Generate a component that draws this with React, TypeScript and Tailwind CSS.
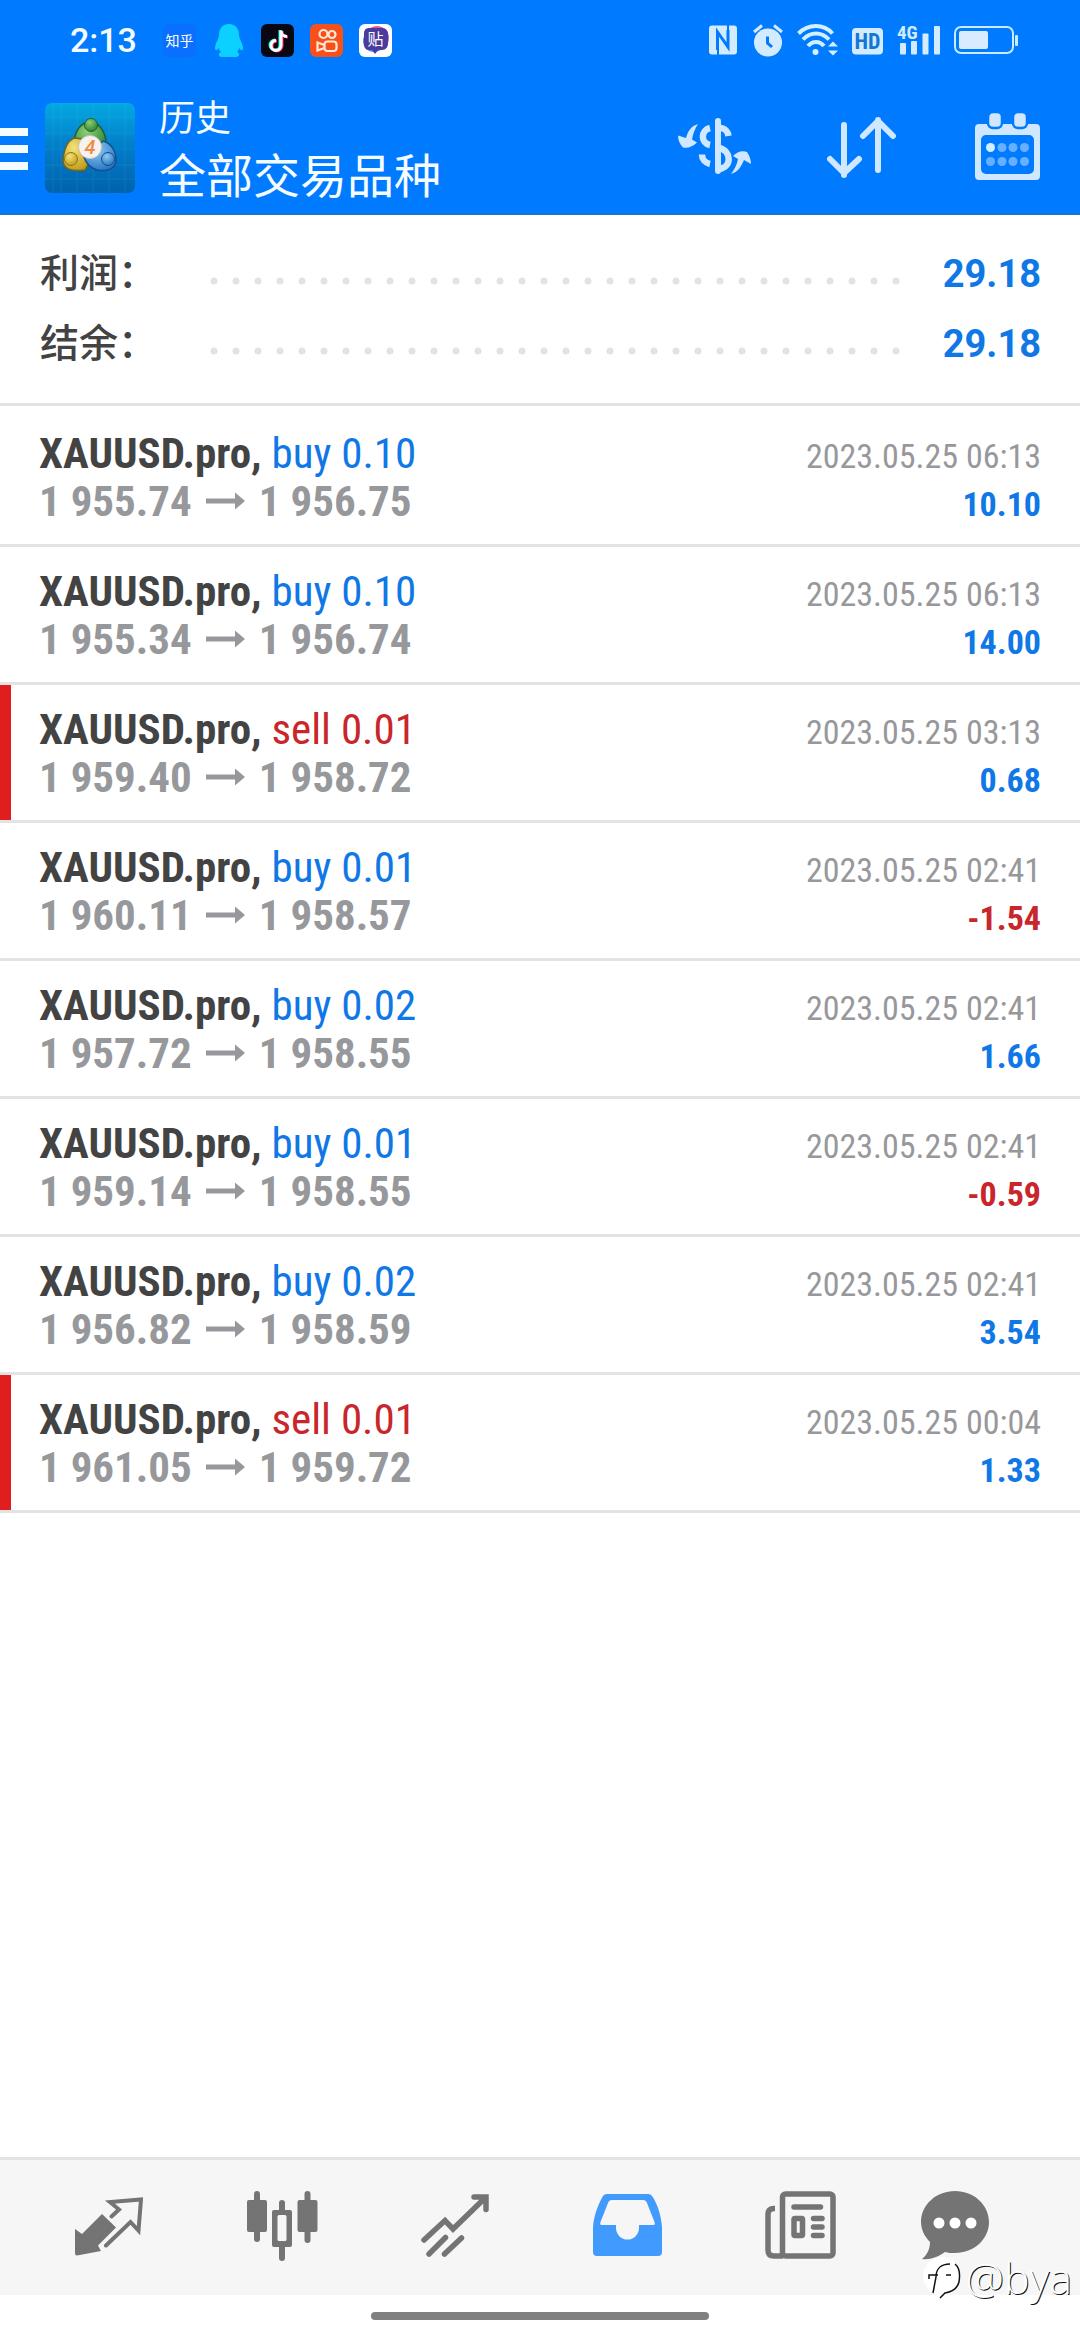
import { ReactNode } from "react";

const SUMMARY = [
  { label: "利润：", value: "29.18" },
  { label: "结余：", value: "29.18" },
];

const DEALS = [
  { side: "buy", volume: "0.10", open: "1 955.74", close: "1 956.75", time: "2023.05.25 06:13", profit: "10.10" },
  { side: "buy", volume: "0.10", open: "1 955.34", close: "1 956.74", time: "2023.05.25 06:13", profit: "14.00" },
  { side: "sell", volume: "0.01", open: "1 959.40", close: "1 958.72", time: "2023.05.25 03:13", profit: "0.68" },
  { side: "buy", volume: "0.01", open: "1 960.11", close: "1 958.57", time: "2023.05.25 02:41", profit: "-1.54" },
  { side: "buy", volume: "0.02", open: "1 957.72", close: "1 958.55", time: "2023.05.25 02:41", profit: "1.66" },
  { side: "buy", volume: "0.01", open: "1 959.14", close: "1 958.55", time: "2023.05.25 02:41", profit: "-0.59" },
  { side: "buy", volume: "0.02", open: "1 956.82", close: "1 958.59", time: "2023.05.25 02:41", profit: "3.54" },
  { side: "sell", volume: "0.01", open: "1 961.05", close: "1 959.72", time: "2023.05.25 00:04", profit: "1.33" },
];

function StatusBar() {
  return (
    <div className="flex items-center justify-between pt-6 pb-[2px] pl-[70px] pr-[62px]">
      <div className="flex items-center">
        <span className="text-[34px] leading-[33px] font-medium w-[93px]">2:13</span>
        <div className="flex items-center gap-4">
          {/* Zhihu */}
          <svg width="33" height="33" viewBox="0 0 33 33">
            <rect width="33" height="33" rx="6" fill="#0a6fff" />
            <text x="16.500" y="22" textAnchor="middle" fontSize="14" fill="#fff">知乎</text>
          </svg>

          {/* QQ */}
          <svg width="33" height="33" viewBox="0 0 33 33" fill="#0cd0ff">
            <path d="M17 0c-7 0-10 5-10 11 0 4-4 8-4 13 0 3 2 3 4 0 0 2 1 3 2 4-3 1-3 5 1 5h14c4 0 4-4 1-5 1-1 2-2 2-4 2 3 4 3 4 0 0-5-4-9-4-13 0-6-3-11-10-11z" />
          </svg>

          {/* TikTok */}
          <svg width="33" height="33" viewBox="0 0 33 33" fill="none" strokeWidth="3">
            <rect width="33" height="33" rx="6" fill="#080812" />
            <path d="M19 6v15a5 5 0 1 1-5-5M19 6c0 4 3 6 6 6" stroke="#25f4ee" />
            <path d="M21 7v15a5 5 0 1 1-5-5M21 7c0 4 3 6 6 6" stroke="#fe2c55" />
            <path d="M20 6.500v15a5 5 0 1 1-5-5M20 6.500c0 4 3 6 6 6" stroke="#fff" />
          </svg>

          {/* Kuaishou */}
          <svg width="33" height="33" viewBox="0 0 33 33" fill="none" stroke="#ffe9d6" strokeWidth="2.200">
            <rect width="33" height="33" rx="6" fill="#f8501a" stroke="none" />
            <circle cx="13.500" cy="10" r="4" />
            <circle cx="22" cy="10.500" r="3.500" />
            <rect x="14.500" y="17.500" width="12" height="9.500" rx="3" />
            <path d="M14.500 21l-7-2.500v8l7-2.500" />
          </svg>

          {/* Tieba */}
          <svg width="33" height="33" viewBox="0 0 33 33">
            <rect width="33" height="33" rx="6" fill="#fff" />
            <circle cx="18" cy="14" r="12" fill="#e05aa0" />
            <circle cx="15" cy="17" r="11" fill="#3f8ff0" />
            <path d="M10 4h13c4 0 6 3 6 6v9c0 4-2 7-6 7h-4l-3 4-3-4h-3c-4 0-5-3-5-7v-9c0-3 1-6 5-6z" fill="#4b3b9d" />
            <text x="16.500" y="21" textAnchor="middle" fontSize="16" fill="#fff">贴</text>
          </svg>
        </div>
      </div>

      <div className="flex items-center gap-[14px]">
        {/* NFC */}
        <svg width="30" height="33" viewBox="0 0 30 33" fill="none" stroke="#007aff">
          <rect x="0" y="1.500" width="28" height="29" rx="3" fill="#d3ebff" stroke="none" />
          <path d="M8.500 26V8l10.500 15V6" strokeWidth="3" />
          <path d="M9 24v7M19 1v7" strokeWidth="2" />
        </svg>

        {/* Alarm */}
        <svg width="30" height="33" viewBox="0 0 30 33" fill="none">
          <circle cx="15" cy="18.500" r="14" fill="#d3ebff" />
          <path d="M1 8l8-6.500M29 8l-8-6.500" stroke="#d3ebff" strokeWidth="3" />
          <path d="M14.500 12.500v6.500l4.500 4" stroke="#007aff" strokeWidth="3" />
        </svg>

        {/* Wi-Fi */}
        <svg width="41" height="33" viewBox="0 0 41 33" fill="none" stroke="#d3f0ff" strokeWidth="4">
          <path d="M1.500 9.500c10-10 25-10 34 0M6 15.500c7.500-8 18.500-8 26 0M11 22c4.500-5.500 11.500-5.500 16 0" />
          <circle cx="18.500" cy="28" r="3" fill="#d3f0ff" stroke="none" />
          <path d="M31 22.500l5-5 5 5zM31 26.500l5 5 5-5z" fill="#d3f0ff" stroke="none" />
        </svg>

        {/* HD */}
        <svg width="31" height="33" viewBox="0 0 31 33">
          <rect y="4" width="31" height="26.500" rx="4" fill="#d3ebff" />
          <text x="15.500" y="25" textAnchor="middle" fontSize="22" fontWeight="700" fill="#1277d6" className="font-['Roboto_Condensed',sans-serif]">HD</text>
        </svg>

        {/* Signal */}
        <svg width="43" height="33" viewBox="0 0 43 33" fill="#d3ebff" className="overflow-visible">
          <rect x="3" y="19" width="6" height="11.500" rx="1" />
          <rect x="14" y="17" width="6" height="13.500" rx="1" />
          <rect x="25.500" y="9.500" width="6" height="21" rx="1" />
          <rect x="37" y="2" width="6" height="28.500" rx="1" />
          <text x="0" y="15" fontSize="19" fontWeight="700" className="font-['Roboto_Condensed',sans-serif]">4G</text>
        </svg>

        {/* Battery */}
        <svg width="64" height="33" viewBox="0 0 64 33" fill="none">
          <rect x="1" y="3" width="58" height="26" rx="6" stroke="#c8ecff" strokeWidth="2" />
          <rect x="5" y="7" width="29" height="18" rx="2" fill="#d9ecff" />
          <rect x="61" y="11" width="3" height="11" rx="1" fill="#c8ecff" />
        </svg>
      </div>
    </div>
  );
}

function AppLogo() {
  return (
    <svg width="90" height="90" viewBox="0 0 90 90">
      <defs>
        <linearGradient id="logoBg" x1="0" y1="0" x2="0" y2="1">
          <stop offset="0" stopColor="#04a8e2" />
          <stop offset="0.500" stopColor="#027cc8" />
          <stop offset="1" stopColor="#0062ac" />
        </linearGradient>
        <radialGradient id="green" cx="0.400" cy="0.300" r="0.800">
          <stop offset="0" stopColor="#8ccf74" />
          <stop offset="1" stopColor="#237a2a" />
        </radialGradient>
        <radialGradient id="yellow" cx="0.400" cy="0.300" r="0.800">
          <stop offset="0" stopColor="#f3e27a" />
          <stop offset="1" stopColor="#bd950f" />
        </radialGradient>
        <radialGradient id="blue" cx="0.400" cy="0.300" r="0.800">
          <stop offset="0" stopColor="#8fc8f0" />
          <stop offset="1" stopColor="#1c6fc0" />
        </radialGradient>
      </defs>
      <rect width="90" height="90" rx="7" fill="url(#logoBg)" />
      <path d="M8 0v90M16 0v90M32 0v90M48 0v90M64 0v90M80 0v90M0 14h90M0 30h90M0 46h90M0 62h90M0 76h90" stroke="#4cc4f0" strokeWidth="1" opacity="0.150" />
      <path d="M45 19c9 0 15 9 16 20l-6 12H36l-7-12c1-11 7-20 16-20z" fill="url(#green)" stroke="#1f5f35" strokeWidth="1.500" />
      <path d="M30 35c-8 2-11 12-12 22 0 9 8 12 22 10l5-9-8-22z" fill="url(#yellow)" stroke="#6f6420" strokeWidth="1.500" />
      <path d="M58 38c8 2 13 10 13 19 0 9-9 12-19 10-7-2-11-7-13-13z" fill="url(#blue)" stroke="#164f8c" strokeWidth="1.500" />
      <circle cx="46" cy="22" r="6.500" fill="url(#green)" stroke="#1f5f35" />
      <circle cx="26" cy="56" r="6.500" fill="url(#yellow)" stroke="#8a7718" />
      <circle cx="63" cy="56" r="6.500" fill="url(#blue)" stroke="#164f8c" />
      <circle cx="45" cy="44" r="11.500" fill="#f7f2f0" stroke="#c9c2b8" />
      <text x="45" y="51" textAnchor="middle" fontSize="20" fontStyle="italic" fontWeight="500" fill="#f08a3c">4</text>
    </svg>
  );
}

function Header() {
  return (
    <header className="bg-[#007aff] text-[#f4fcff] border-b-2 border-[#1a74cc]">
      <StatusBar />

      <div className="flex items-center justify-between pt-[31px] pb-2 pr-10">
        <div className="flex items-center">
          <button aria-label="menu" className="w-[45px]">
            <svg width="28" height="58" viewBox="0 0 28 58" fill="#f4fcff">
              <path d="M0 9h28v8H0zM0 26h28v8H0zM0 43h28v8H0z" />
            </svg>
          </button>
          <AppLogo />
          <div className="ml-6 font-['Noto_Sans_CJK_SC',sans-serif]">
            <div className="text-[36px] leading-[50px]">历史</div>
            <h1 className="text-[47px] leading-[65px]">全部交易品种</h1>
          </div>
        </div>

        <div className="flex items-center gap-19">
          <button aria-label="currency">
            <svg width="74" height="62" viewBox="0 2 74 62" fill="none" stroke="#cfe8ff" strokeWidth="6.500">
              <path d="M41 6v50" strokeWidth="6" strokeLinecap="round" />
              <path d="M33 13c-9 2-10 15 0 17M33 49c-5-1-8-5-8-9.500M43 13c5 0 8 4 8.500 8" />
              <path d="M42 33c13 3 13 19 0 21" />
              <path d="M21 9c-7 2-10 7-12 14L1 20.500c0 5 2 9 5 12 5 1 10-1 14-5l-5-3c1-6 3-11 6-15.500zM54 59c7-2 10-7 13-14l7 4c0-5-2-9-4-12-5-2-10 0-14 4l5 3c-1 6-4 11-7 15z" fill="#cfe8ff" stroke="none" />
            </svg>
          </button>
          <button aria-label="sort">
            <svg width="72" height="62" viewBox="0 2 72 62" fill="none" stroke="#cfe8ff" strokeWidth="6" strokeLinecap="round" strokeLinejoin="round">
              <path d="M17 10v50M3 44l14 14 15-14M51 55V5M36 21L51 6l15 15" />
            </svg>
          </button>
          <button aria-label="calendar">
            <svg width="65" height="70" viewBox="0 0 65 70">
              <path fillRule="evenodd" d="M4 11h57a4 4 0 0 1 4 4v48a4 4 0 0 1-4 4H4a4 4 0 0 1-4-4V15a4 4 0 0 1 4-4zm7 11a5 5 0 0 0-5 5v29a5 5 0 0 0 5 5h43a5 5 0 0 0 5-5V27a5 5 0 0 0-5-5z" fill="#cfe8ff" />
              <g fill="#cfe8ff" stroke="#007aff" strokeWidth="2.500">
                <rect x="13" y="-1" width="14" height="16" rx="5" />
                <rect x="38" y="-1" width="14" height="16" rx="5" />
              </g>
              <circle cx="15.500" cy="34.500" r="4.500" fill="#cff0ff" />
              <g fill="#66b0ff">
                <circle cx="27" cy="34.500" r="4.500" />
                <circle cx="38" cy="34.500" r="4.500" />
                <circle cx="49.500" cy="34.500" r="4.500" />
                <circle cx="15.500" cy="48.500" r="4.500" />
                <circle cx="27" cy="48.500" r="4.500" />
                <circle cx="38" cy="48.500" r="4.500" />
                <circle cx="49.500" cy="48.500" r="4.500" />
              </g>
            </svg>
          </button>
        </div>
      </div>
    </header>
  );
}

// Dotted leader between a summary label and its value
function Leader() {
  return (
    <svg className="flex-1 min-w-0 h-[22px]" aria-hidden="true">
      <defs>
        <pattern id="leader" width="22" height="22" patternUnits="userSpaceOnUse">
          <circle cx="4" cy="18" r="3.500" fill="#e3e3e3" />
        </pattern>
      </defs>
      <rect width="100%" height="22" fill="url(#leader)" />
    </svg>
  );
}

function Deal({ deal }: { deal: (typeof DEALS)[number] }) {
  const isSell = deal.side === "sell";
  const isLoss = deal.profit.startsWith("-");

  return (
    <li className="border-b-3 border-[#e3e3e3]">
      <div className={`flex items-start justify-between pt-5 pb-4 pl-7 pr-[39px] border-l-[11px] ${isSell ? "border-[#e01e20]" : "border-transparent"}`}>
        <div className="text-[43px] leading-12">
          <div>
            <span className="font-bold text-[#434343]">XAUUSD.pro,</span>{" "}
            <span className={isSell ? "text-[#c8262b]" : "text-[#0f78e6]"}>
              {deal.side} {deal.volume}
            </span>
          </div>
          <div className="flex items-center gap-[14px] font-bold text-[#97989b]">
            <span>{deal.open}</span>
            <svg width="39" height="18" viewBox="0 0 39 18" fill="currentColor" aria-hidden="true">
              <path d="M0 6.500h29V0.500l10 8.500-10 8.500v-6H0z" />
            </svg>
            <span>{deal.close}</span>
          </div>
        </div>

        <div className="text-right text-[34px] leading-12 pt-[3px]">
          <div className="text-[#97989b]">{deal.time}</div>
          <div className={`font-bold ${isLoss ? "text-[#c8262b]" : "text-[#0f78e6]"}`}>{deal.profit}</div>
        </div>
      </div>
    </li>
  );
}

function NavButton({ label, last, children }: { label: string; last?: boolean; children: ReactNode }) {
  return (
    <button aria-label={label} className={`flex justify-center ${last ? "w-[136px]" : "flex-1"}`}>
      {children}
    </button>
  );
}

function BottomNav() {
  return (
    <nav className="flex items-center pl-[22px] pr-[57px] pt-[29px] pb-[30px] bg-[#f6f6f6] border-t-3 border-[#e3e3e3] text-[#747474]">
      <NavButton label="quotes">
        <svg width="68" height="76" viewBox="0 -8 68 76">
          <path d="M0 32l7 5 20-20 14 13.500-18 18 3 5.500-24 4.500q-2 0-2-2z" fill="currentColor" />
          <path d="M36.500 19.500l7.500-7-9-7.500 31-2.500-2.500 31L55.500 25 31 48.500" fill="none" stroke="currentColor" strokeWidth="4" strokeLinecap="round" />
        </svg>
      </NavButton>
      <NavButton label="charts">
        <svg width="72" height="76" viewBox="0 -2 72 76" fill="currentColor">
          <rect x="8" width="6" height="51" rx="3" />
          <rect x="1" y="9" width="20" height="32" rx="2" />
          <rect x="33" y="9" width="6" height="61" rx="3" />
          <path fillRule="evenodd" d="M28 19h16a2 2 0 0 1 2 2v33a2 2 0 0 1-2 2H28a2 2 0 0 1-2-2V21a2 2 0 0 1 2-2z" />
          <rect x="31.500" y="24" width="9" height="26" rx="1.500" fill="#f6f6f6" />
          <rect x="58.500" width="6" height="52" rx="3" />
          <rect x="51.500" y="9" width="20" height="32" rx="2" />
        </svg>
      </NavButton>
      <NavButton label="trade">
        <svg width="68" height="76" viewBox="0 -5 68 76" fill="none" stroke="currentColor" strokeWidth="5.500" strokeLinecap="round">
          <path d="M3 46l21-19.500 8 8.500L64 4M53 3h12v12.500" />
          <path d="M24.500 43.500L8 60M40.500 44L23.500 60" />
        </svg>
      </NavButton>
      <NavButton label="history">
        <svg width="69" height="76" viewBox="0 -5 69 76">
          <path d="M0 33C1 20 6 9 10 2q1-2 4-2h41q3 0 4 2c5 7 9 18 10 31v25q0 4-4 4H4q-4 0-4-4z" fill="#419bff" />
          <path d="M7.500 28L15 9q1-3 4-3h31q3 0 4 3l7.500 19q1 3-1 3H46v3a11.500 11.500 0 0 1-23 0v-3H8.500q-2 0-1-3z" fill="#f6f6f6" />
        </svg>
      </NavButton>
      <NavButton label="news">
        <svg width="71" height="76" viewBox="0 -2 71 76" fill="none" stroke="currentColor" strokeWidth="5.500" strokeLinecap="round">
          <rect x="17.500" y="3" width="50.500" height="62" rx="3" />
          <path d="M10 17.500H9q-6 0-6 6V59q0 6 6 6h9" strokeLinecap="butt" />
          <path d="M29 16h26.500M48.500 27.500H57M48.500 36H57M48.500 44.500H57" />
          <rect x="29" y="27.500" width="8.500" height="17" rx="1" />
        </svg>
      </NavButton>
      <NavButton label="messages" last>
        <svg width="68" height="76" viewBox="0 -2 68 76" fill="currentColor">
          <path d="M34 0c19 0 34 14 34 31S53 62 34 62c-4 0-7 0-10-1-7 5-15 8-23 7 5-4 8-10 8-17C3 45 0 38 0 31 0 14 15 0 34 0z" />
          <g fill="#fff">
            <circle cx="18" cy="32" r="5.500" />
            <circle cx="34" cy="32" r="5.500" />
            <circle cx="50" cy="32" r="5.500" />
          </g>
        </svg>
      </NavButton>
    </nav>
  );
}

export default function App() {
  return (
    <div className="min-h-screen flex flex-col bg-white font-['Roboto','Noto_Sans_CJK_SC',sans-serif]">
      <Header />

      <main className="flex-1">
        <dl className="pl-10 pr-[39px] py-6 border-b-3 border-[#e3e3e3]">
          {SUMMARY.map((row) => (
            <div key={row.label} className="flex items-center h-[70px]">
              <dt className="w-[170px] text-[39px] font-medium text-[#434343]">{row.label}</dt>
              <Leader />
              <dd className="ml-9 text-[38px] font-bold text-[#0f78e6]">{row.value}</dd>
            </div>
          ))}
        </dl>

        <ul className="pt-[3px] font-['Roboto_Condensed',Roboto,sans-serif]">
          {DEALS.map((deal, i) => (
            <Deal key={i} deal={deal} />
          ))}
        </ul>
      </main>

      <footer className="relative">
        <BottomNav />

        {/* Gesture bar */}
        <div className="flex justify-center pt-[17px] pb-5">
          <div className="w-[338px] h-2 rounded-full bg-[#808080]" />
        </div>

        {/* Watermark */}
        <div className="absolute right-2 bottom-[38px] flex items-center gap-1 pointer-events-none text-white">
          <svg width="40" height="46" viewBox="0 0 40 46" fill="none">
            <circle cx="20" cy="21" r="19" fill="#fff" />
            <path d="M7 24v-4h9M24 20h5M11 38l3-16c0-8 5-13 14-13M33 9c5 4 5 12 4 18-2 8-8 10-14 11l-5 5" stroke="#111" strokeWidth="1.500" />
          </svg>
          <span className="text-[43px] leading-12 font-light font-['Open_Sans',sans-serif] [text-shadow:1px_1px_0_#111]">@bya</span>
        </div>
      </footer>
    </div>
  );
}
